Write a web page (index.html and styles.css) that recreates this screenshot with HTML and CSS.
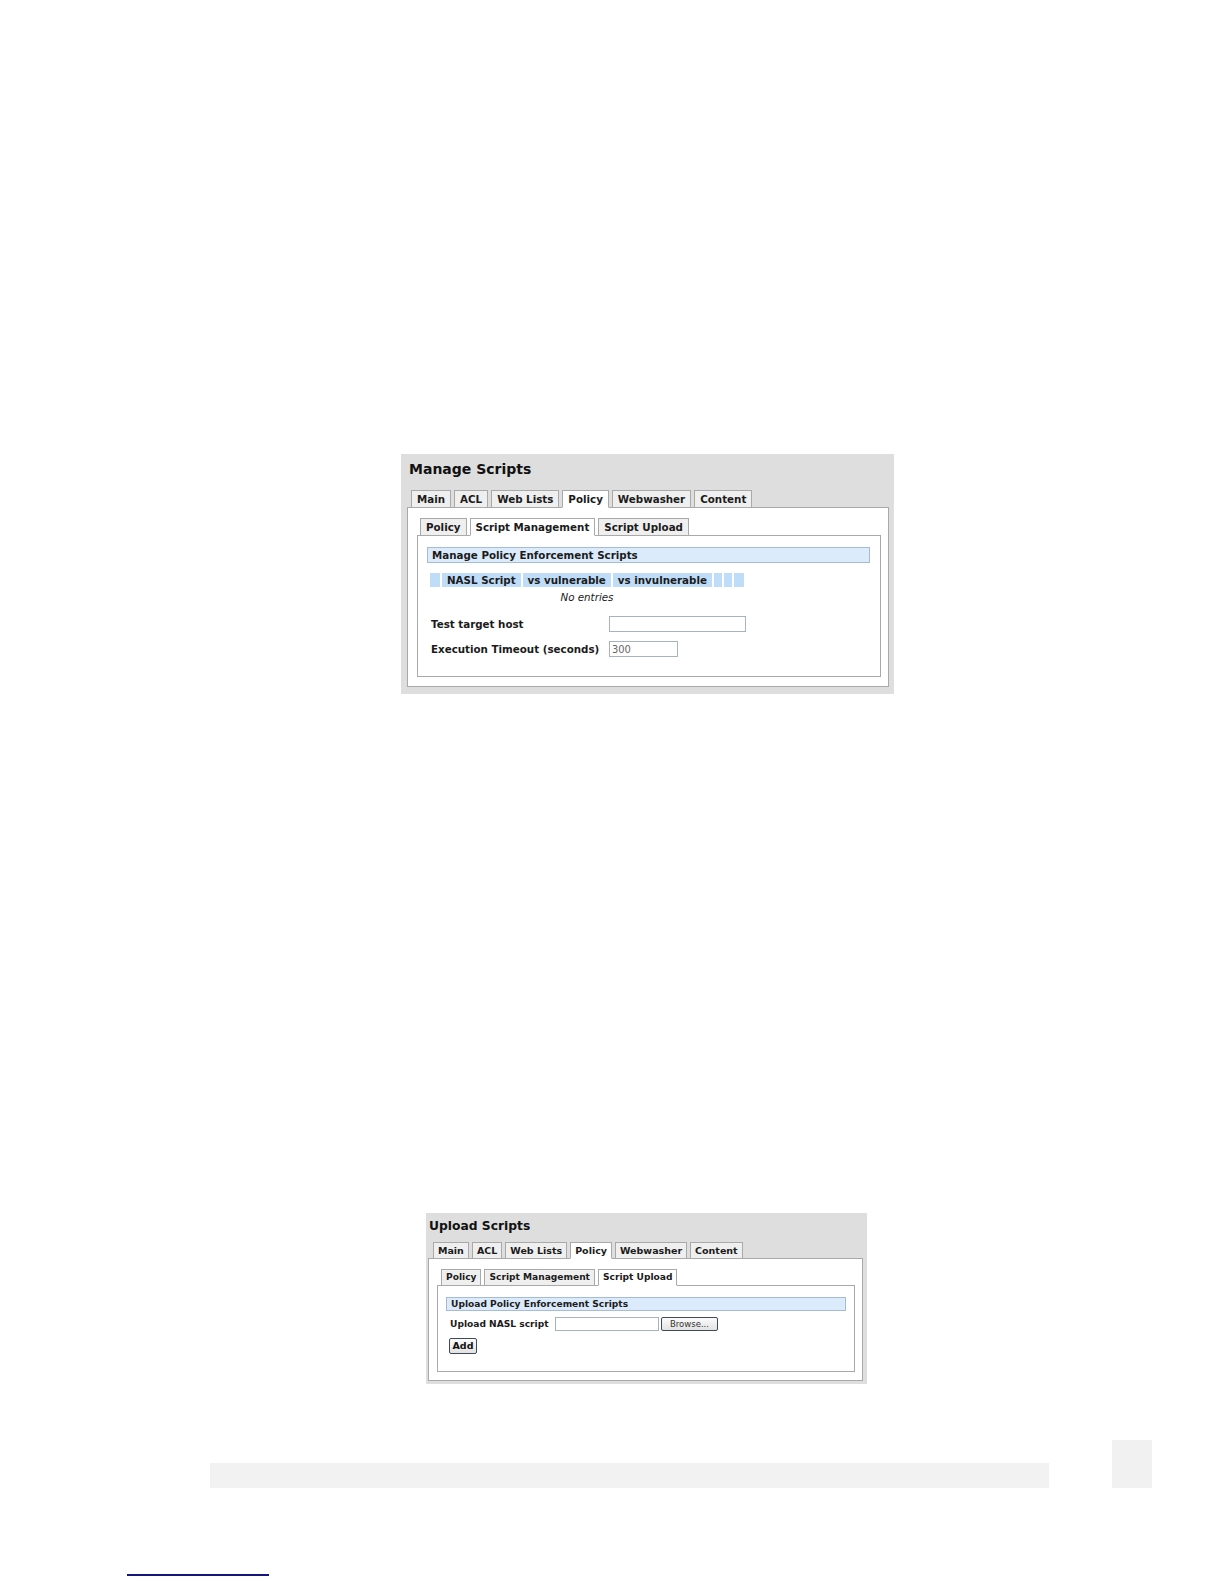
FILE: index.html
```html
<!DOCTYPE html>
<html>
	<head>
		<meta charset="UTF-8">
		<title>Policy Enforcement Scripts</title>
		<link rel="stylesheet" href="styles.css">
	</head>
	<body>

		<!-- Manage Scripts screen -->
		<div class="shot shot-manage">
			<h2 class="shot-title">Manage Scripts</h2>
			<ul class="tabs">
				<li>Main</li>
				<li>ACL</li>
				<li>Web Lists</li>
				<li class="on">Policy</li>
				<li>Webwasher</li>
				<li>Content</li>
			</ul>
			<div class="panel">
				<ul class="tabs">
					<li>Policy</li>
					<li class="on">Script Management</li>
					<li>Script Upload</li>
				</ul>
				<div class="panel inner">
					<div class="section-head">Manage Policy Enforcement Scripts</div>
					<table class="script-table">
						<tr>
							<th class="blank w10"></th>
							<th>NASL Script</th>
							<th>vs vulnerable</th>
							<th>vs invulnerable</th>
							<th class="blank w8"></th>
							<th class="blank w8"></th>
							<th class="blank w10"></th>
						</tr>
						<tr>
							<td class="empty" colspan="7">No entries</td>
						</tr>
					</table>
					<div class="form">
						<div class="field">
							<label>Test target host</label>
							<input type="text" class="text wide" value="">
						</div>
						<div class="field">
							<label>Execution Timeout (seconds)</label>
							<input type="text" class="text short" value="300">
						</div>
					</div>
				</div>
			</div>
		</div>

		<!-- Upload Scripts screen -->
		<div class="shot shot-upload">
			<h2 class="shot-title">Upload Scripts</h2>
			<ul class="tabs main-tabs">
				<li>Main</li>
				<li>ACL</li>
				<li>Web Lists</li>
				<li class="on">Policy</li>
				<li>Webwasher</li>
				<li>Content</li>
			</ul>
			<div class="panel">
				<ul class="tabs">
					<li>Policy</li>
					<li>Script Management</li>
					<li class="on">Script Upload</li>
				</ul>
				<div class="panel inner">
					<div class="section-head">Upload Policy Enforcement Scripts</div>
					<div class="upload-row">
						<label>Upload NASL script</label>
						<input type="text" class="text file" value="">
						<button class="btn browse">Browse...</button>
					</div>
					<button class="btn add">Add</button>
				</div>
			</div>
		</div>

		<div class="foot">
			<div class="foot-bar"></div>
			<div class="foot-page"></div>
		</div>
		<div class="footnote-rule"></div>

	</body>
</html>
```

FILE: styles.css
```css
*{margin:0;padding:0;}
body{background:#fff;font-family:"DejaVu Sans",Verdana,sans-serif;color:#1b1b1b;}
ul{list-style:none;}

/* screenshots */
.shot{box-sizing:border-box;background:#dedede;overflow:hidden;}
.shot-manage{width:493px;height:240px;margin:454px 0 0 401px;padding:7px 5px 0 6px;font-size:10.3px;}
.shot-upload{width:441px;height:171px;margin:519px 0 0 426px;padding:6px 4px 0 2px;font-size:9.1px;}

.shot-title{font-size:14px;font-weight:bold;line-height:17px;margin:0 0 12px 2px;color:#111;}
.shot-upload .shot-title{font-size:12.3px;line-height:15px;margin:0 0 8px 1px;}

/* tabs */
.tabs{display:flex;gap:3px;margin:0 0 -1px 4px;position:relative;}
.tabs li{box-sizing:border-box;height:18px;line-height:16px;padding:0 5px;border:1px solid #a9a9a9;background:#efefef;font-weight:bold;white-space:nowrap;}
.tabs li.on{background:#fff;border-bottom-color:#fff;}
.shot-upload .tabs li{height:17px;line-height:15px;padding:0 4px;}
.shot-upload .main-tabs{margin-left:5px;}
.shot-upload .main-tabs li{font-size:9.5px;}

.panel{border:1px solid #a9a9a9;background:#fff;padding:10px 7px 9px 9px;}
.panel .tabs{margin-left:3px;}
.panel.inner{padding:11px 10px 19px 9px;}
.shot-upload .panel{padding:10px 7px 8px 8px;}
.shot-upload .panel .tabs{margin-left:4px;}
.shot-upload .panel.inner{padding:11px 8px 17px 8px;}

.section-head{border:1px solid #a4bcd4;background:#dbebfc;line-height:14px;padding-left:4px;font-weight:bold;}
.shot-upload .section-head{line-height:12px;}

/* script list */
.script-table{border-spacing:2px;margin:8px 0 0 1px;}
.script-table th{background:#bfdcf9;font-weight:bold;line-height:14px;padding:0 5px;text-align:left;white-space:nowrap;}
.script-table th.blank{padding:0;}
.script-table .w8{width:8px;}
.script-table .w10{width:10px;}
.script-table td.empty{font-style:italic;text-align:center;line-height:16px;color:#222;}

/* form */
.form{margin-top:9px;}
.field{display:flex;align-items:center;}
.field + .field{margin-top:9px;}
.field label{box-sizing:border-box;width:182px;padding-left:4px;font-weight:bold;}

.text{box-sizing:border-box;height:16px;border:1px solid #a6b4c2;padding:0 2px;font-family:"DejaVu Sans Condensed","DejaVu Sans",sans-serif;font-size:11px;color:#666;outline:none;}
.text.wide{width:137px;}
.text.short{width:69px;}

.upload-row{display:flex;align-items:center;margin-top:6px;}
.upload-row label{box-sizing:border-box;width:109px;padding-left:4px;font-weight:bold;}
.text.file{width:104px;height:14px;}

.btn{box-sizing:border-box;border:1px solid #3d4b5a;border-radius:2px;background:linear-gradient(#fbfbfb,#e2e2e2);font-family:inherit;color:#111;}
.btn.browse{width:57px;height:14px;margin-left:2px;font-size:8.5px;line-height:12px;color:#333;}
.btn.add{display:block;width:28px;height:16px;margin:7px 0 0 3px;font-size:9.5px;font-weight:bold;line-height:14px;}

/* page footer */
.foot{display:flex;align-items:flex-end;gap:63px;margin:56px 0 0 210px;}
.foot-bar{width:839px;height:25px;background:#f2f2f2;}
.foot-page{width:40px;height:48px;background:#f1f1f1;}
.footnote-rule{width:142px;height:2px;background:#16167a;margin:86px 0 0 127px;}
```
